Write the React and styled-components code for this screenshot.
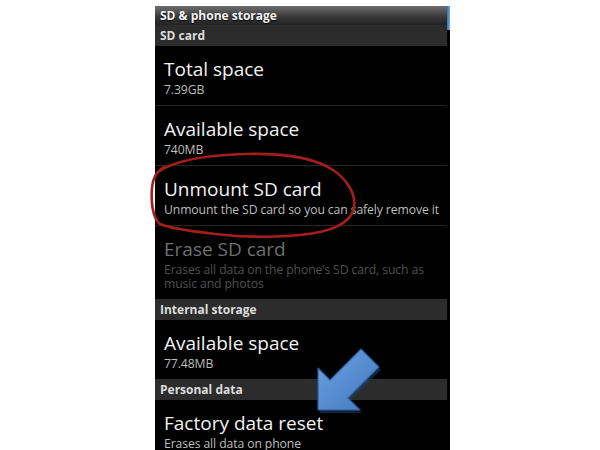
import React from 'react';
import styled, { createGlobalStyle } from 'styled-components';

const GlobalStyle = createGlobalStyle`
  html, body {
    margin: 0;
    padding: 0;
    background: #fff;
  }
  body {
    font-family: "Open Sans", "Noto Sans", "DejaVu Sans", sans-serif;
  }
`;

const Page = styled.div`
  position: relative;
  width: 600px;
  height: 450px;
  overflow: hidden;
  background: #fff;
`;

const Phone = styled.div`
  display: flex;
  width: 295px;
  height: 444px;
  margin: 6px 0 0 155px;
  background: #000;
  overflow: hidden;
`;

const List = styled.div`
  flex: 1;
  display: flex;
  flex-direction: column;

  & > * {
    flex-shrink: 0;
  }
`;

const ScrollTrack = styled.div`
  width: 3px;
  display: flex;
  flex-direction: column;
`;

const ScrollThumb = styled.div`
  height: 24px;
  flex-shrink: 0;
  background: linear-gradient(to right, #3d6fae, #7aa7e0);
`;

const TitleBar = styled.div`
  height: 19px;
  display: flex;
  align-items: center;
  padding-left: 5px;
  background: linear-gradient(to bottom, #6e6e6e 0%, #3a3a3a 55%, #232323 100%);
  color: #f4f4f4;
  font-size: 12px;
  font-weight: 700;
  text-shadow: 0 1px 1px #000;
`;

const Category = styled.div`
  height: 21px;
  display: flex;
  align-items: center;
  padding-left: 5px;
  background: #2c2c2c;
  color: #dcdcdc;
  font-size: 12px;
  font-weight: 700;
`;

const Item = styled.div`
  display: flex;
  flex-direction: column;
  gap: 2px;
  padding: 12px 3px 8px 9px;
  border-bottom: ${({ $last }) => ($last ? 'none' : '1px solid #262626')};
`;

const ItemTitle = styled.div`
  font-size: 19px;
  line-height: 23px;
  color: ${({ $disabled }) => ($disabled ? '#6f6f6f' : '#f2f2f2')};
`;

const ItemSummary = styled.div`
  font-size: 12.2px;
  line-height: 14px;
  color: ${({ $disabled }) => ($disabled ? '#505050' : '#bdbdbd')};
  letter-spacing: -0.1px;
`;

const Annotations = styled.svg`
  position: absolute;
  top: 0;
  left: 0;
  pointer-events: none;
`;

const sections = [
  {
    header: 'SD card',
    items: [
      { title: 'Total space', summary: '7.39GB' },
      { title: 'Available space', summary: '740MB' },
      { title: 'Unmount SD card', summary: 'Unmount the SD card so you can safely remove it' },
      {
        title: 'Erase SD card',
        summary: 'Erases all data on the phone\u2019s SD card, such as music and photos',
        disabled: true,
        last: true,
      },
    ],
  },
  {
    header: 'Internal storage',
    items: [{ title: 'Available space', summary: '77.48MB', last: true }],
  },
  {
    header: 'Personal data',
    items: [{ title: 'Factory data reset', summary: 'Erases all data on phone', last: true }],
  },
];

const App = () => (
  <>
    <GlobalStyle />
    <Page>
      <Phone>
        <List>
          <TitleBar>SD &amp; phone storage</TitleBar>
          {sections.map((section) => (
            <React.Fragment key={section.header}>
              <Category>{section.header}</Category>
              {section.items.map((item) => (
                <Item key={item.title} $last={item.last}>
                  <ItemTitle $disabled={item.disabled}>{item.title}</ItemTitle>
                  <ItemSummary $disabled={item.disabled}>{item.summary}</ItemSummary>
                </Item>
              ))}
            </React.Fragment>
          ))}
        </List>
        <ScrollTrack>
          <ScrollThumb />
        </ScrollTrack>
      </Phone>

      <Annotations width="600" height="450" viewBox="0 0 600 450">
        <defs>
          <linearGradient id="arrowFill" x1="0" y1="0" x2="1" y2="1">
            <stop offset="0" stopColor="#6fa3e2" />
            <stop offset="1" stopColor="#3e77bf" />
          </linearGradient>
        </defs>
        {/* hand drawn loop */}
        <path
          d="M 158 172 C 175 160, 210 155, 245 154 C 285 153, 315 158, 333 170 C 348 180, 356 195, 354 207 C 352 220, 338 228, 320 232 C 295 237, 255 238, 225 235 C 195 232, 170 228, 160 224 C 152 218, 151 200, 152 188 C 153 178, 156 172, 164 167"
          fill="none"
          stroke="#a61d1d"
          strokeWidth="2.6"
          strokeLinecap="round"
          strokeLinejoin="round"
        />
        {/* arrow */}
        <polygon
          points="320,413 320,371 332,383 363,352 381,370 350,401 362,413"
          fill="#1e3d66"
          opacity="0.55"
        />
        <polygon
          points="318,410 318,368 330,380 361,349 379,367 348,398 360,410"
          fill="url(#arrowFill)"
          stroke="#2b5c98"
          strokeWidth="1.2"
          strokeLinejoin="round"
        />
      </Annotations>
    </Page>
  </>
);

export default App;
